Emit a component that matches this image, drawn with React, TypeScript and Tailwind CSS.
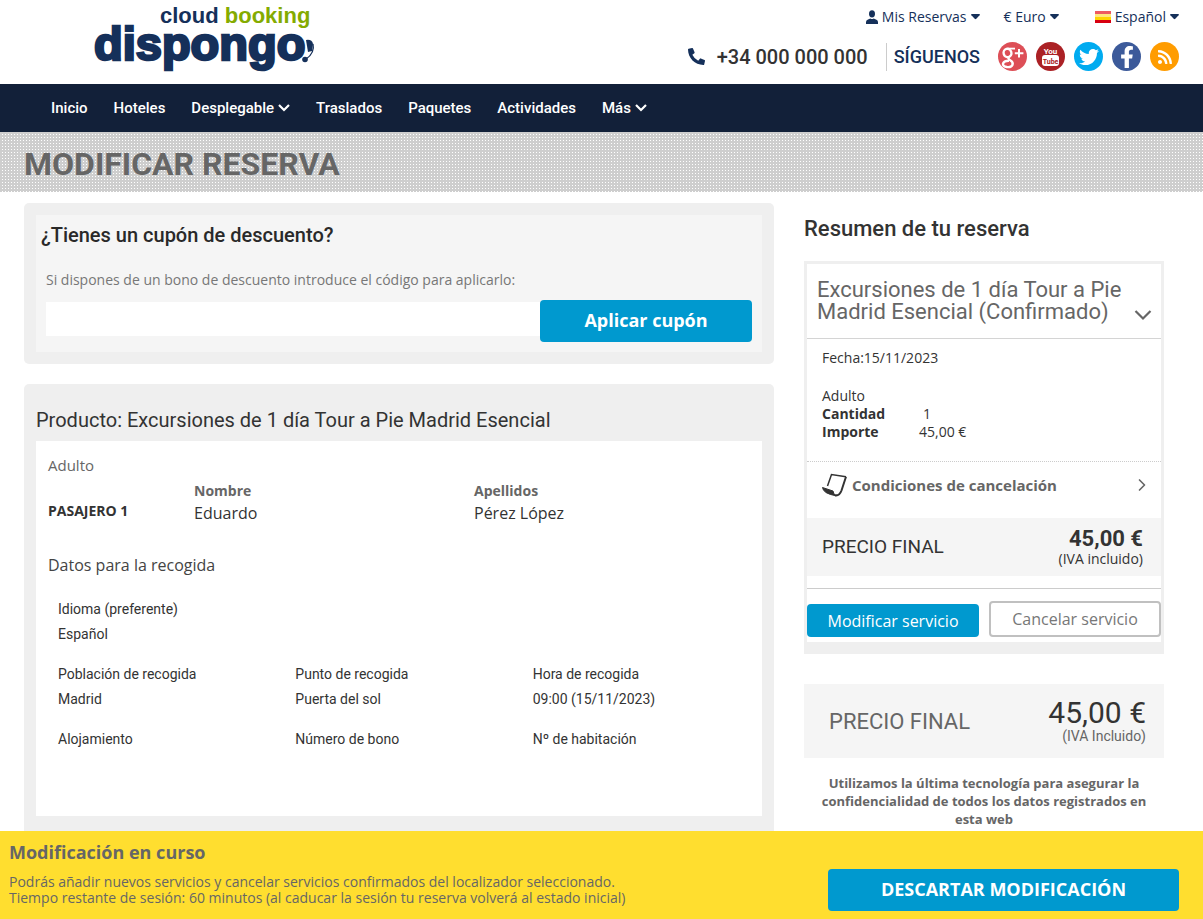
import { FaTwitter, FaFacebookF, FaRss, FaPhoneAlt } from "react-icons/fa";
import { ChevronRight } from "lucide-react";
import type { ReactNode } from "react";

const sans = "font-['Open_Sans',sans-serif]";
const roboto = "font-['Roboto',sans-serif]";

function Logo() {
  return (
    <svg viewBox="0 0 230 84" className="h-[84px] w-[230px] shrink-0" role="img" aria-label="cloud booking dispongo">
      <g fontFamily="Liberation Sans, Arial, sans-serif" fontWeight="700">
        <text x="66" y="23" fontSize="22" fill="#15305a">cloud <tspan fill="#84ab00">booking</tspan></text>
        <text x="0" y="60" fontSize="47" fill="#15305a" stroke="#15305a" strokeWidth="2.6">dispongo</text>
      </g>
      <path d="M212 40q6-1 7 4l-1 7-4 1z" fill="#15305a" />
      <path d="M219 44q2 9-7 15" fill="none" stroke="#15305a" strokeWidth="1.3" />
      <circle cx="211" cy="59.500" r="2.800" fill="#15305a" />
    </svg>
  );
}

function UserIcon() {
  return (
    <svg viewBox="0 0 12 14" className="h-3.5 w-3" fill="currentColor" aria-hidden="true">
      <ellipse cx="6" cy="3.800" rx="3" ry="3.600" />
      <path d="M0 14v-2q0-2 2-2.600L4.300 8.500Q6 9.500 7.700 8.500L10 9.400q2 .600 2 2.600v2z" />
    </svg>
  );
}

function Caret() {
  return (
    <svg viewBox="0 0 9 6" className="h-1.5 w-[9px]" fill="currentColor" aria-hidden="true">
      <path d="M.8 0h7.400q1.200.2.400 1.200L5.300 4.800q-.8.800-1.600 0L.4 1.200Q-.4.200.8 0z" />
    </svg>
  );
}

function SpainFlag() {
  return (
    <svg viewBox="0 0 16 12" className="h-3 w-4" aria-hidden="true">
      <rect width="16" height="12" fill="#ffd400" />
      <rect width="16" height="3" fill="#ee5a60" />
      <rect y="9" width="16" height="3" fill="#d80010" />
      <rect y="3" width="16" height="3" fill="#ffe780" />
    </svg>
  );
}

function Social({ label, color, children }: { label: string; color: string; children: ReactNode }) {
  return (
    <a href="#" aria-label={label} className={`flex size-[29px] items-center justify-center rounded-full text-white ${color}`}>
      {children}
    </a>
  );
}

function GooglePlusIcon() {
  return (
    <svg viewBox="0 0 29 29" className="size-[29px]" fill="none" stroke="#fff" aria-hidden="true">
      <ellipse cx="9.500" cy="11" rx="3.900" ry="4.200" strokeWidth="2.400" transform="rotate(-15 9.500 11)" />
      <path d="M9.500 6.600h7.500" strokeWidth="1.800" />
      <path d="M11 15q-1.500 1.800 1.200 3.200Q15.500 20 14.500 22.800 13.500 25.500 9 25 4.500 24.300 5 21.600q.8-3 6-2.900" strokeWidth="2.400" />
      <path d="M21 7v8.500M16.800 11.200h8.600" strokeWidth="2" />
    </svg>
  );
}

function ScrollIcon() {
  return (
    <svg viewBox="0 0 26 24" className="h-6 w-[26px] shrink-0" fill="none" stroke="#333" aria-hidden="true">
      <path d="M5.500 13 9.500 1.500 24 3.800" strokeWidth="1.500" />
      <path d="M24 3.800 19.500 17.500Q17.500 23 13 22.300" strokeWidth="2" />
      <path d="M.5 14.500 11 18q.5 3.500 3 4.800Q1 20.500.5 14.500z" fill="#333" strokeWidth="1" />
    </svg>
  );
}

const navItems = [
  { label: "Inicio" },
  { label: "Hoteles" },
  { label: "Desplegable", menu: true },
  { label: "Traslados" },
  { label: "Paquetes" },
  { label: "Actividades" },
  { label: "Más", menu: true },
];

function Header() {
  return (
    <header className="flex h-[84px] justify-between pr-6 pl-[94px] text-[#15305a]">
      <Logo />
      <div className="flex flex-col items-end">
        <div className="flex h-[34px] items-center gap-6 text-sm">
          <button className="flex items-center gap-1"><UserIcon />Mis Reservas<Caret /></button>
          <button className="flex items-center gap-1">€ Euro<Caret /></button>
          <button className="ml-3 flex items-center gap-1"><SpainFlag />Español<Caret /></button>
        </div>
        <div className={`flex items-center pt-2 ${roboto}`}>
          <FaPhoneAlt className="size-[17px]" />
          <a href="tel:+34000000000" className="ml-3 text-xl font-medium text-[#333]">+34 000 000 000</a>
          <span className="ml-[18px] border-l border-[#ccc] py-0.5 pl-[7px] text-lg leading-6 font-medium">SÍGUENOS</span>
          <div className="ml-[18px] flex gap-[9px]">
            <Social label="Google+" color="bg-[#dd4f57]"><GooglePlusIcon /></Social>
            <Social label="YouTube" color="bg-[#ab2125]">
              <svg viewBox="0 0 29 29" className="size-[29px]" fontFamily="Roboto, sans-serif" fontWeight="700" textAnchor="middle">
                <text x="14.500" y="11.500" fontSize="8" fill="#fff">You</text>
                <rect x="6" y="13" width="17" height="11" rx="3" fill="#fff" />
                <text x="14.500" y="21.500" fontSize="7" fill="#ab2125">Tube</text>
              </svg>
            </Social>
            <Social label="Twitter" color="bg-[#00abf0]"><FaTwitter className="size-5" /></Social>
            <Social label="Facebook" color="bg-[#3c5a9a]"><FaFacebookF className="size-[22px]" /></Social>
            <Social label="RSS" color="bg-[#ff9c00]"><FaRss className="size-4" /></Social>
          </div>
        </div>
      </div>
    </header>
  );
}

function Field({ label, value }: { label: string; value?: string }) {
  return (
    <div>
      <dt>{label}</dt>
      {value && <dd>{value}</dd>}
    </div>
  );
}

function Coupon() {
  return (
    <section className="rounded-[5px] bg-[#efefef] p-3">
      <form className="bg-[#f5f5f5] px-[10px] pt-2 pb-[10px]">
        <h2 className={`-ml-[5px] text-xl leading-6 font-medium text-[#292929] ${roboto}`}>¿Tienes un cupón de descuento?</h2>
        <label htmlFor="coupon" className="block pt-[22px] pb-[10px] text-sm leading-[21px] text-[#777]">
          Si dispones de un bono de descuento introduce el código para aplicarlo:
        </label>
        <div className="flex items-start">
          <input id="coupon" type="text" className="mt-0.5 h-[34px] min-w-0 flex-1 bg-white px-3" />
          <button type="button" className="h-[42px] w-[212px] rounded-[4px] bg-[#0099cf] pb-0.5 text-lg font-bold text-white">Aplicar cupón</button>
        </div>
      </form>
    </section>
  );
}

function Product() {
  return (
    <section className="rounded-[5px] bg-[#efefef] px-3 pt-[22px] pb-9">
      <h2 className={`pb-[7px] text-xl leading-7 text-[#333] ${roboto}`}>Producto: Excursiones de 1 día Tour a Pie Madrid Esencial</h2>
      <div className="bg-white pt-3 pb-16 pl-3 text-[#333]">
        <h3 className="text-[15px] leading-6 text-[#666]">Adulto</h3>
        <div className="flex pt-1 pr-2">
          <div className="w-[146px] pt-5 text-sm leading-5 font-bold">PASAJERO 1</div>
          <div className="grid flex-1 grid-cols-2">
            <div>
              <div className="text-sm leading-5 font-bold text-[#666]">Nombre</div>
              <div className="leading-6">Eduardo</div>
            </div>
            <div>
              <div className="text-sm leading-5 font-bold text-[#666]">Apellidos</div>
              <div className="leading-6">Pérez López</div>
            </div>
          </div>
        </div>
        <h3 className="pt-7 text-base leading-6 text-[#444]">Datos para la recogida</h3>
        <dl className={`grid grid-cols-3 gap-x-2 gap-y-[15px] pt-5 pl-[10px] text-sm leading-[25px] ${roboto}`}>
          <div className="col-span-3"><Field label="Idioma (preferente)" value="Español" /></div>
          <Field label="Población de recogida" value="Madrid" />
          <Field label="Punto de recogida" value="Puerta del sol" />
          <Field label="Hora de recogida" value="09:00 (15/11/2023)" />
          <Field label="Alojamiento" />
          <Field label="Número de bono" />
          <Field label="Nº de habitación" />
        </dl>
      </div>
    </section>
  );
}

function Summary() {
  return (
    <aside className="w-[360px] shrink-0 text-[#333]">
      <h2 className={`pt-3 pb-[18px] text-[22px] leading-7 font-medium ${roboto}`}>Resumen de tu reserva</h2>
      <section className="border-[3px] border-b-12 border-[#efefef] bg-white">
        <button className={`flex w-full items-end justify-between border-b border-[#d4d4d4] pt-[15px] pr-2 pb-[15px] pl-[10px] text-left text-[22px] leading-[22px] text-[#666] ${roboto}`}>
          <span>Excursiones de 1 día Tour a Pie Madrid Esencial (Confirmado)</span>
          <svg viewBox="0 0 20 20" className="size-5 shrink-0" fill="none" stroke="#666" strokeWidth="2.200"><path d="M2.500 8 10 15.500 17.500 8" /></svg>
        </button>
        <div className="px-[15px] pt-[10px] pb-5 text-sm leading-[18px]">
          <p>Fecha:15/11/2023</p>
          <p className="pt-5">Adulto</p>
          <dl className="grid grid-cols-[97px_auto]">
            <dt className="font-bold">Cantidad</dt><dd className="pl-1">1</dd>
            <dt className="font-bold">Importe</dt><dd>45,00 €</dd>
          </dl>
        </div>
        <button className="flex w-full items-center border-t border-dotted border-[#ccc] pt-[11px] pr-[9px] pb-[21px] pl-[15px] text-[15px] leading-6 font-bold text-[#666]">
          <ScrollIcon />
          <span className="ml-1 flex-1 text-left">Condiciones de cancelación</span>
          <ChevronRight className="size-5" />
        </button>
        <div className={`flex items-center justify-between bg-[#f5f5f5] px-[15px] py-2 ${roboto}`}>
          <span className="text-[19px] leading-7">PRECIO FINAL</span>
          <div className="pr-[3px] pt-0.5 text-right">
            <div className="text-[22px] leading-[22px] font-bold">45,00 €</div>
            <div className={`text-sm leading-[18px] ${sans}`}>(IVA incluido)</div>
          </div>
        </div>
        <div className="mt-3 grid grid-cols-2 items-end gap-[10px] border-t border-[#ccc] pt-3 pb-[5px]">
          <button className="h-[33px] rounded-[4px] bg-[#0099cf] text-white">Modificar servicio</button>
          <button className="h-9 rounded-[4px] border-2 border-[#c0c0c0] text-[#777]">Cancelar servicio</button>
        </div>
      </section>
      <section className={`mt-[30px] flex items-center justify-between bg-[#f5f5f5] py-[14px] pr-[18px] pl-[25px] ${roboto}`}>
        <span className="text-[22px] text-[#666]">PRECIO FINAL</span>
        <div className="text-right">
          <div className="text-[30px] leading-[30px]">45,00 €</div>
          <div className="text-sm leading-4 text-[#666]">(IVA Incluido)</div>
        </div>
      </section>
      <p className="px-3 pt-4 text-center text-[13px] leading-[18px] font-bold text-[#666]">
        Utilizamos la última tecnología para asegurar la confidencialidad de todos los datos registrados en esta web
      </p>
    </aside>
  );
}

export default function App() {
  return (
    <div className={`h-screen overflow-hidden bg-white ${sans}`}>
      <Header />
      <nav className={`flex h-12 items-center gap-[26px] bg-[#122039] px-[51px] text-[15px] font-medium text-white ${roboto}`}>
        {navItems.map((item) => (
          <a key={item.label} href="#" className="flex items-center gap-1">
            {item.label}
            {item.menu && (
              <svg viewBox="0 0 12 8" className="h-2 w-3" fill="none" stroke="currentColor" strokeWidth="2.200" aria-hidden="true">
                <path d="M1 1l5 5 5-5" />
              </svg>
            )}
          </a>
        ))}
      </nav>
      <div className="flex h-[60px] items-center bg-white bg-[linear-gradient(#cecece_2px,transparent_2px),linear-gradient(90deg,#cecece_2px,transparent_2px)] bg-size-[3px_3px] pt-1 pl-6">
        <h1 className={`text-[32px] leading-10 font-bold text-[#666] ${roboto}`}>MODIFICAR RESERVA</h1>
      </div>
      <main className="flex gap-[30px] pt-[11px] pr-[39px] pl-6">
        <div className="flex min-w-0 flex-1 flex-col gap-5">
          <Coupon />
          <Product />
        </div>
        <Summary />
      </main>
      <footer className="fixed inset-x-0 bottom-0 flex h-[88px] items-end justify-between bg-[#ffde2f] pr-6 pb-2 pl-[9px] text-[#666]">
        <div className="self-start pt-[7px]">
          <h2 className="text-lg leading-7 font-bold">Modificación en curso</h2>
          <p className="pt-2 text-sm leading-4">
            Podrás añadir nuevos servicios y cancelar servicios confirmados del localizador seleccionado.
            <br />
            Tiempo restante de sesión: 60 minutos (al caducar la sesión tu reserva volverá al estado inicial)
          </p>
        </div>
        <button className="h-[42px] w-[351px] rounded-[4px] bg-[#0099cf] pb-0.5 text-lg font-bold text-white">DESCARTAR MODIFICACIÓN</button>
      </footer>
    </div>
  );
}
